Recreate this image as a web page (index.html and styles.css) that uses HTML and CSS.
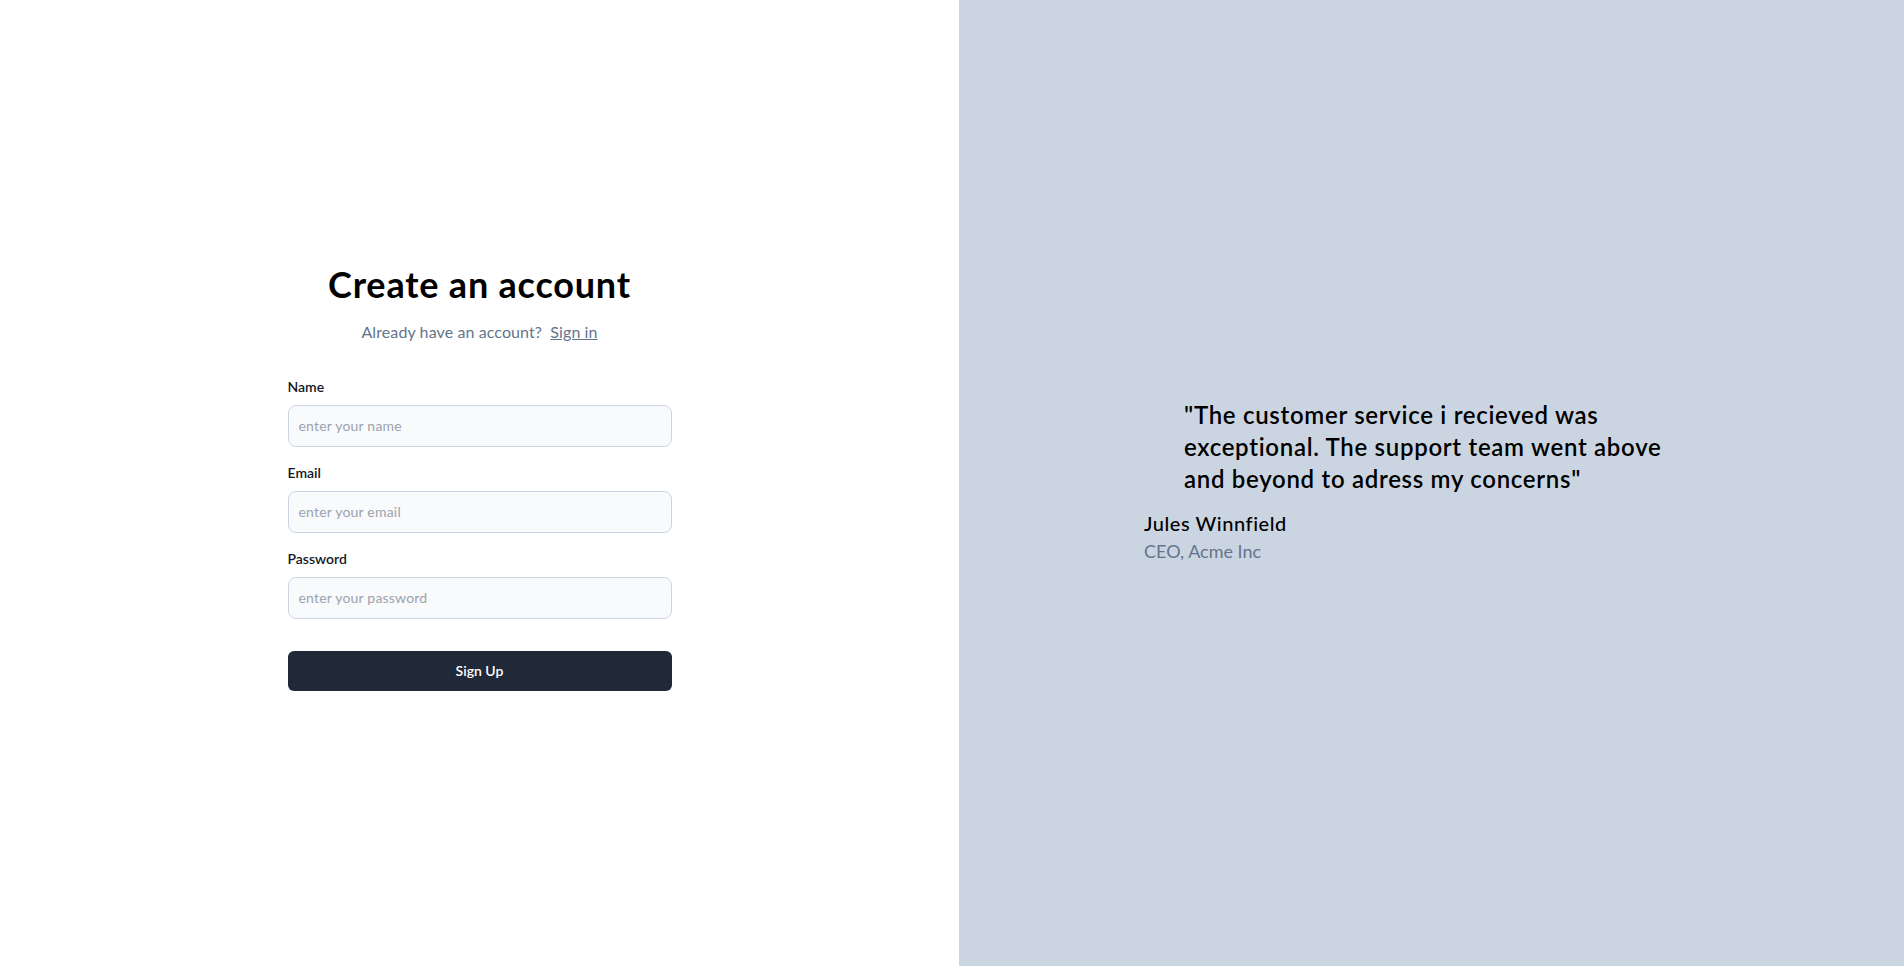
FILE: index.html
```html
<!DOCTYPE html>
<html lang="en">
<head>
<meta charset="utf-8">
<title>Create an account</title>
<link rel="stylesheet" href="styles.css">
</head>
<body>
<main class="page">
  <section class="left">
    <div class="form-wrap">
      <h1 class="title">Create an account</h1>
      <p class="subtitle">Already have an account? <a href="#" class="link">Sign in</a></p>
      <form class="form">
        <div class="field">
          <label class="label" for="name">Name</label>
          <input class="input" id="name" type="text" placeholder="enter your name">
        </div>
        <div class="field">
          <label class="label" for="email">Email</label>
          <input class="input" id="email" type="email" placeholder="enter your email">
        </div>
        <div class="field">
          <label class="label" for="password">Password</label>
          <input class="input" id="password" type="password" placeholder="enter your password">
        </div>
        <button class="button" type="button">Sign Up</button>
      </form>
    </div>
  </section>
  <section class="right">
    <figure class="testimonial">
      <blockquote class="quote">"The customer service i recieved was exceptional. The support team went above and beyond to adress my concerns"</blockquote>
      <figcaption class="caption">
        <div class="author">Jules Winnfield</div>
        <div class="role">CEO, Acme Inc</div>
      </figcaption>
    </figure>
  </section>
</main>
</body>
</html>
```

FILE: styles.css
```css
* { box-sizing: border-box; }
html, body { margin: 0; padding: 0; }
body {
  font-family: Lato, "Open Sans", sans-serif;
  color: #000;
}
.page {
  display: grid;
  grid-template-columns: 959px 1fr;
  height: 966px;
}
.left {
  background: #fff;
  display: flex;
  align-items: center;
  justify-content: center;
}
.form-wrap {
  width: 384px;
  margin-top: -12px;
}
.title {
  margin: 0;
  font-size: 36px;
  line-height: 40px;
  font-weight: 700;
  letter-spacing: 0.8px;
  text-align: center;
}
.subtitle {
  margin: 16px 0 0;
  font-size: 16px;
  line-height: 24px;
  letter-spacing: 0.1px;
  color: #64748b;
  text-align: center;
}
.link {
  color: #64748b;
  text-decoration: underline;
  margin-left: 4px;
}
.form {
  margin-top: 33px;
  display: flex;
  flex-direction: column;
}
.field {
  display: flex;
  flex-direction: column;
  margin-bottom: 16px;
}
.field:last-of-type { margin-bottom: 0; }
.label {
  font-size: 14px;
  line-height: 20px;
  font-weight: 600;
  color: #111827;
  margin-bottom: 8px;
}
.input {
  height: 42px;
  padding: 10px;
  border: 1px solid #cbd5e1;
  border-radius: 8px;
  background: #f8fafc;
  font-family: inherit;
  font-size: 14px;
  letter-spacing: 0.2px;
  color: #111827;
  outline: none;
}
.input::placeholder { color: #9ca3af; }
.button {
  margin-top: 32px;
  height: 40px;
  border: 0;
  border-radius: 6px;
  background: #1f2937;
  color: #fff;
  font-family: inherit;
  font-size: 14px;
  font-weight: 600;
  cursor: pointer;
}
.right {
  background: #cbd5e1;
  display: flex;
  align-items: center;
  justify-content: center;
}
.testimonial {
  margin: -3px 0 0;
  width: 575px;
}
.quote {
  margin: 0 0 0 40px;
  width: 480px;
  font-size: 24px;
  line-height: 32px;
  font-weight: 600;
  letter-spacing: 0.7px;
  color: #000;
}
.caption { margin-top: 14px; }
.author {
  font-size: 20px;
  line-height: 28px;
  font-weight: 500;
  letter-spacing: 0.55px;
  color: #000;
}
.role {
  font-size: 18px;
  line-height: 28px;
  color: #64748b;
}
```
